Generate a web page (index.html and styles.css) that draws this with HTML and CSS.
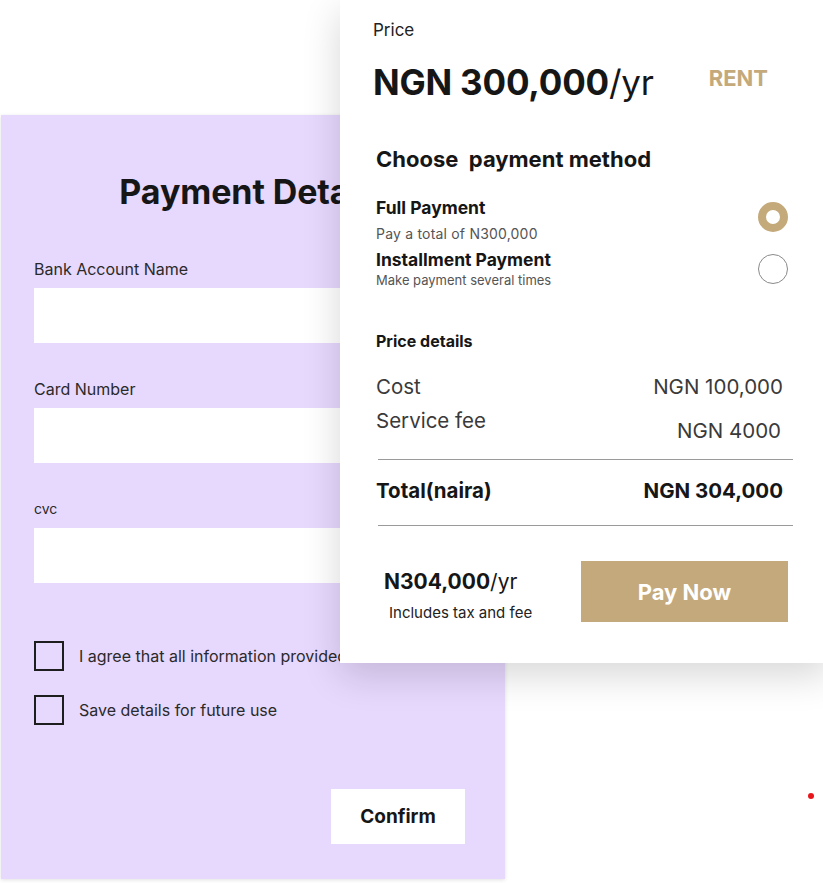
FILE: index.html
```html
<!DOCTYPE html>
<html lang="en">
<head>
<meta charset="utf-8">
<title>Payment</title>
<link rel="stylesheet" href="styles.css">
</head>
<body>
<div class="stage">
  <section class="details-card">
    <h1 class="details-title">Payment Details</h1>
    <label class="field-label">Bank Account Name</label>
    <div class="field-input"></div>
    <label class="field-label gap">Card Number</label>
    <div class="field-input"></div>
    <label class="field-label gap small">cvc</label>
    <div class="field-input"></div>
    <div class="check-row first"><span class="check-box"></span><span class="check-text">I agree that all information provided is correct</span></div>
    <div class="check-row"><span class="check-box"></span><span class="check-text">Save details for future use</span></div>
    <div class="confirm-wrap"><button class="confirm-btn">Confirm</button></div>
  </section>

  <section class="price-card">
    <div class="price-label">Price</div>
    <div class="price-row">
      <div class="price-amount"><strong>NGN 300,000</strong>/yr</div>
      <div class="rent">RENT</div>
    </div>
    <h2 class="method-title">Choose&nbsp; payment method</h2>
    <div class="option first">
      <div class="option-text">
        <div class="option-name">Full Payment</div>
        <div class="option-sub wide">Pay a total of N300,000</div>
      </div>
      <span class="radio on"></span>
    </div>
    <div class="option second">
      <div class="option-text">
        <div class="option-name">Installment Payment</div>
        <div class="option-sub tight">Make payment several times</div>
      </div>
      <span class="radio"></span>
    </div>
    <h3 class="details-head">Price details</h3>
    <div class="line-row cost"><span>Cost</span><span>NGN 100,000</span></div>
    <div class="line-row fee"><span>Service fee</span><span class="fee-val">NGN 4000</span></div>
    <div class="rule"></div>
    <div class="line-row total"><span>Total(naira)</span><span>NGN 304,000</span></div>
    <div class="rule second"></div>
    <div class="pay-row">
      <div class="pay-summary">
        <div class="pay-amount"><strong>N304,000</strong>/yr</div>
        <div class="pay-note">Includes tax and fee</div>
      </div>
      <button class="pay-btn">Pay Now</button>
    </div>
  </section>

  <span class="red-dot"></span>
</div>
</body>
</html>
```

FILE: styles.css
```css
* { box-sizing: border-box; }
html, body { margin: 0; padding: 0; background: #fff; }
body {
  width: 823px;
  height: 883px;
  overflow: hidden;
  font-family: Inter, "Open Sans", Arial, sans-serif;
  color: #1a1a1a;
}
.stage {
  position: relative;
  width: 823px;
  height: 883px;
  padding: 115px 0 0 1px;
}

/* Lavender card */
.details-card {
  width: 504px;
  height: 764px;
  background: #e7d8fe;
  box-shadow: 0 1px 4px rgba(0,0,0,0.12);
  padding: 57px 0 0 33px;
  display: flex;
  flex-direction: column;
}
.details-title {
  margin: 0 0 0 -33px;
  width: 504px;
  text-align: center;
  font-size: 34px;
  line-height: 40px;
  font-weight: 700;
  color: #161616;
  letter-spacing: -0.1px;
}
.field-label {
  display: block;
  margin-top: 47px;
  font-size: 16px;
  line-height: 20px;
  color: #2a2a2a;
}
.field-label.gap { margin-top: 36px; }
.field-label.small { font-size: 14px; }
.field-input {
  margin-top: 9px;
  width: 438px;
  height: 55px;
  background: #fff;
}
.check-row {
  display: flex;
  align-items: center;
  margin-top: 24px;
}
.check-row.first { margin-top: 58px; }
.check-box {
  width: 30px;
  height: 30px;
  border: 2px solid #1e1e1e;
  flex: none;
}
.check-text {
  margin-left: 15px;
  font-size: 16px;
  color: #2a2a2a;
  white-space: nowrap;
}
.confirm-wrap {
  display: flex;
  justify-content: flex-end;
  margin-top: 64px;
  padding-right: 40px;
}
.confirm-btn {
  width: 134px;
  height: 55px;
  border: none;
  background: #fff;
  font-family: inherit;
  font-size: 19px;
  font-weight: 700;
  color: #161616;
}

/* White price card */
.price-card {
  position: absolute;
  left: 340px;
  top: 0;
  width: 490px;
  height: 663px;
  background: #fff;
  box-shadow: 0 12px 36px rgba(0,0,0,0.16);
  padding: 20px 47px 0 33px;
  display: flex;
  flex-direction: column;
}
.price-label {
  font-size: 17px;
  line-height: 20px;
  color: #222;
}
.price-row {
  margin-top: 20px;
  height: 44px;
  display: flex;
  align-items: center;
}
.price-amount {
  font-size: 35px;
  line-height: 44px;
  color: #161616;
  font-weight: 400;
  letter-spacing: -0.2px;
}
.price-amount strong { font-weight: 700; }
.rent {
  margin-left: auto;
  margin-right: 15px;
  margin-bottom: 8px;
  font-size: 22px;
  font-weight: 700;
  color: #c4a97b;
}
.method-title {
  margin: 42px 0 0 3px;
  font-size: 22px;
  line-height: 26px;
  font-weight: 700;
  color: #161616;
}
.option {
  margin-left: 3px;
  margin-right: -5px;
  display: flex;
  align-items: center;
  justify-content: space-between;
}
.option.first { margin-top: 26px; }
.option.second { margin-top: 8px; }
.option-name {
  font-size: 17.5px;
  line-height: 20px;
  font-weight: 700;
  color: #161616;
}
.option-sub {
  margin-top: 8px;
  font-size: 13px;
  line-height: 16px;
  color: #555;
}
.option-sub.wide { font-size: 14px; letter-spacing: 0.2px; }
.option-sub.tight { margin-top: 2px; }
.radio {
  width: 30px;
  height: 30px;
  border-radius: 50%;
  border: 1px solid #8a8a8a;
  flex: none;
}
.radio.on {
  border: 8px solid #c4a97b;
  margin-top: -6px;
}
.details-head {
  margin: 44px 0 0 3px;
  font-size: 16px;
  line-height: 18px;
  font-weight: 700;
  color: #161616;
}
.line-row {
  margin-left: 3px;
  display: flex;
  justify-content: space-between;
  align-items: flex-start;
  font-size: 20.5px;
  line-height: 24px;
  color: #3a3a3a;
}
.line-row.cost { margin-top: 25px; }
.line-row.fee { margin-top: 10px; }
.fee-val { margin-top: 10px; margin-right: 2px; }
.rule {
  margin: 16px -10px 0 5px;
  height: 1px;
  background: #9a9a9a;
}
.rule.second { margin-top: 22px; }
.line-row.total {
  margin-top: 19px;
  font-weight: 700;
  font-size: 20.5px;
  color: #161616;
}
.pay-row {
  margin-top: 35px;
  display: flex;
  align-items: flex-start;
  justify-content: space-between;
  margin-right: -5px;
}
.pay-summary { padding-left: 11px; margin-top: 8px; }
.pay-amount {
  font-size: 21px;
  line-height: 26px;
  color: #161616;
}
.pay-amount strong { font-weight: 700; }
.pay-note {
  margin-top: 9px;
  margin-left: 5px;
  font-size: 15px;
  line-height: 18px;
  color: #222;
}
.pay-btn {
  width: 207px;
  height: 61px;
  border: none;
  background: #c4a97d;
  color: #fff;
  font-family: inherit;
  font-size: 22px;
  font-weight: 700;
}

.red-dot {
  position: absolute;
  left: 808px;
  top: 793px;
  width: 6px;
  height: 6px;
  border-radius: 50%;
  background: #e8161b;
}
```
